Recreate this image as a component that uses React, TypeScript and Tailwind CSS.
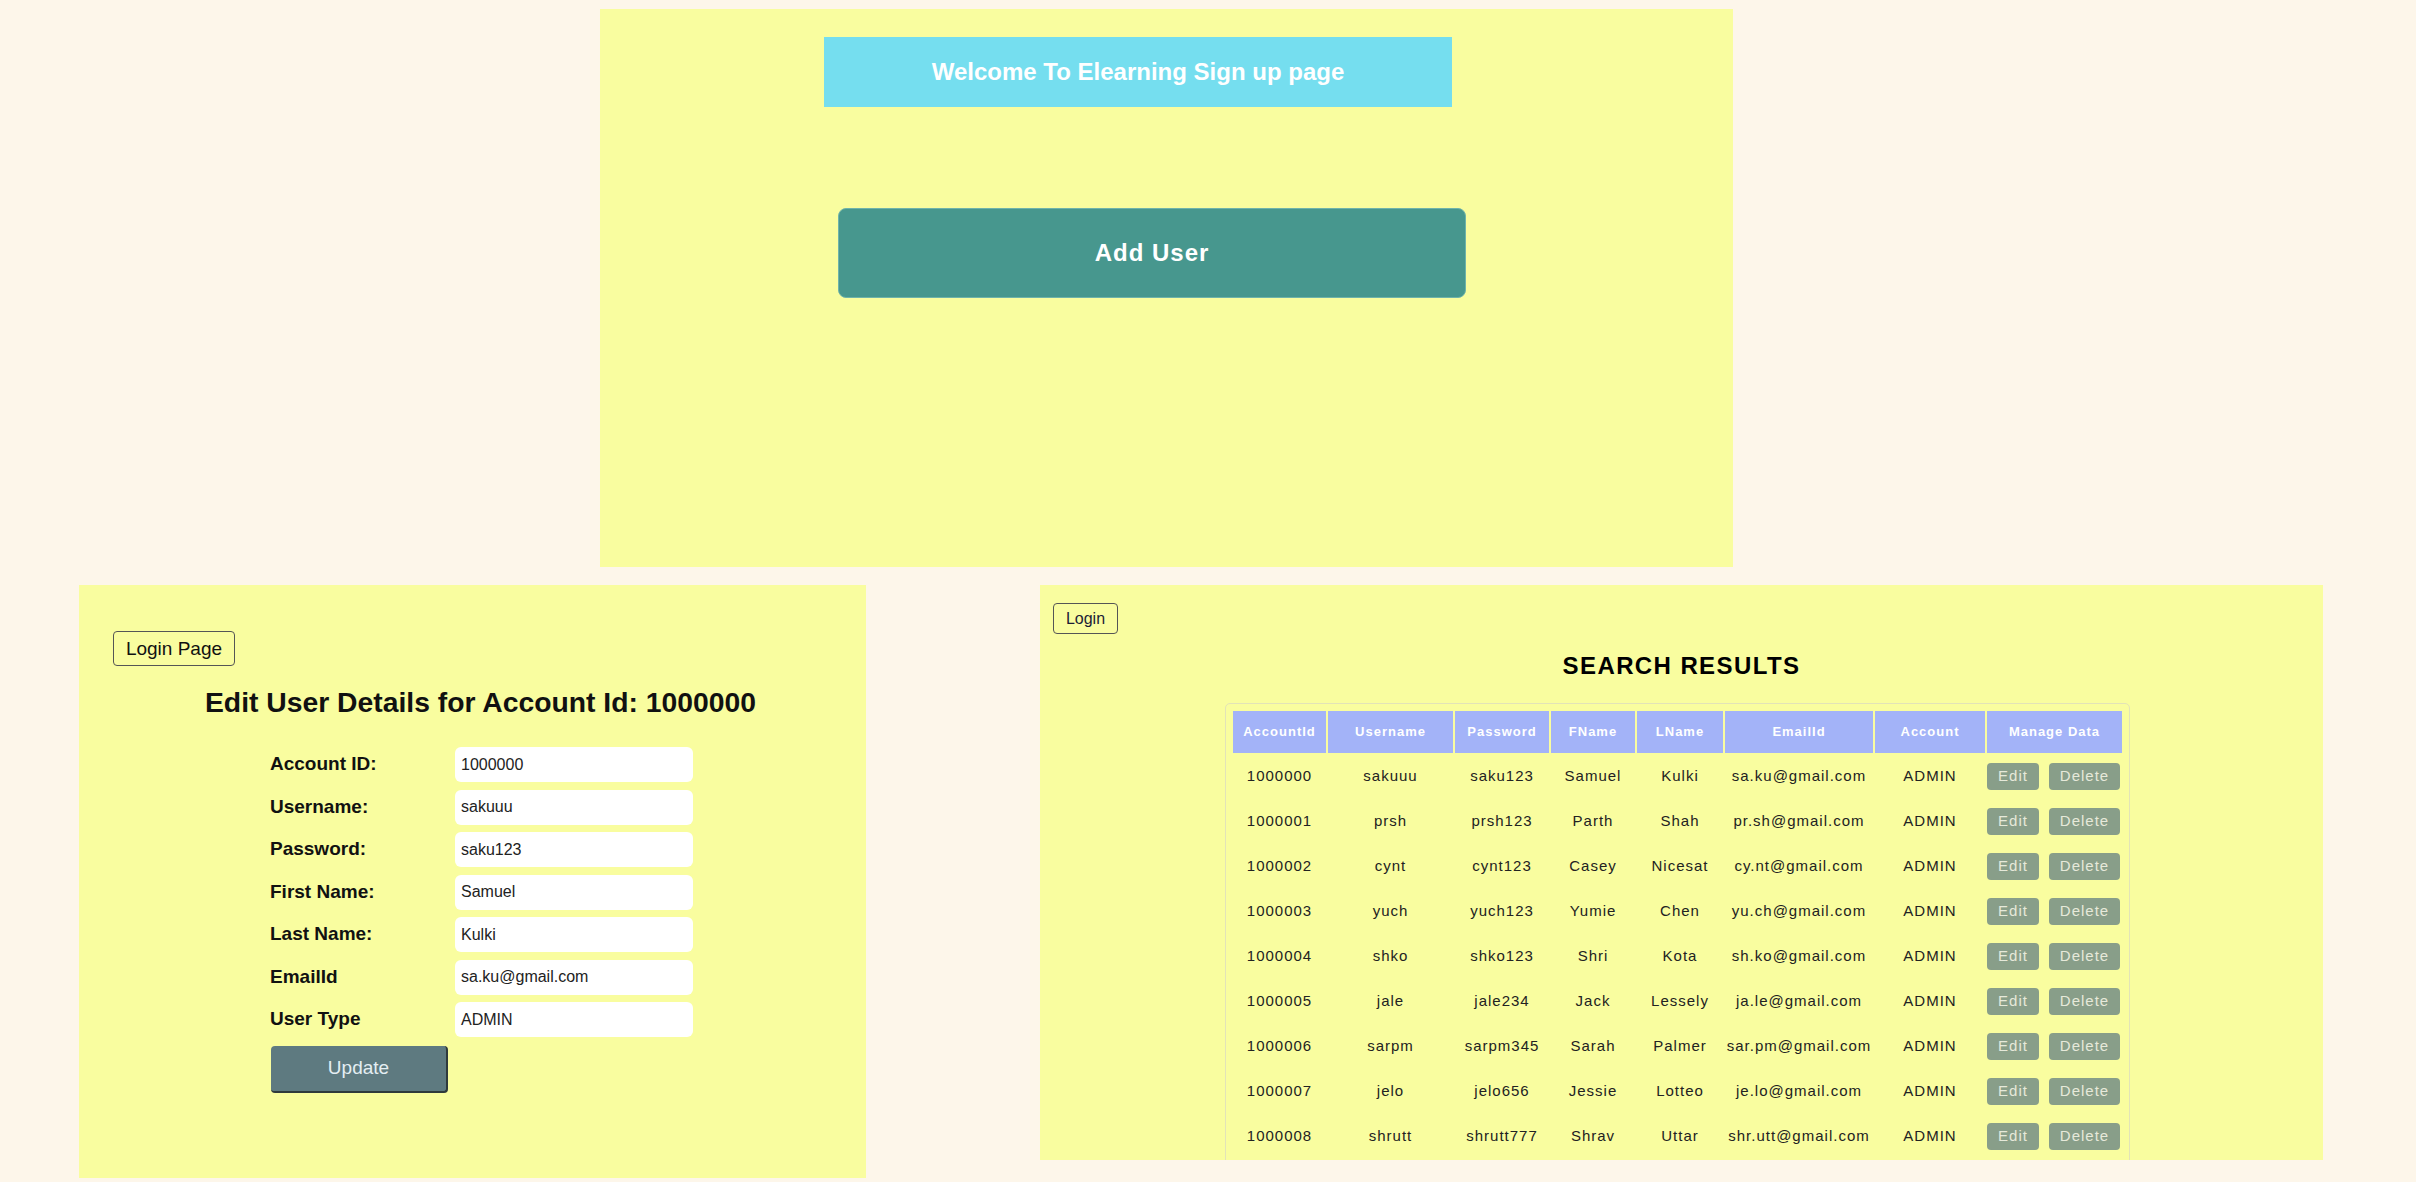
import React from "react";

const users = [
    { id: "1000000", username: "sakuuu", password: "saku123", fname: "Samuel", lname: "Kulki", email: "sa.ku@gmail.com", account: "ADMIN" },
    { id: "1000001", username: "prsh", password: "prsh123", fname: "Parth", lname: "Shah", email: "pr.sh@gmail.com", account: "ADMIN" },
    { id: "1000002", username: "cynt", password: "cynt123", fname: "Casey", lname: "Nicesat", email: "cy.nt@gmail.com", account: "ADMIN" },
    { id: "1000003", username: "yuch", password: "yuch123", fname: "Yumie", lname: "Chen", email: "yu.ch@gmail.com", account: "ADMIN" },
    { id: "1000004", username: "shko", password: "shko123", fname: "Shri", lname: "Kota", email: "sh.ko@gmail.com", account: "ADMIN" },
    { id: "1000005", username: "jale", password: "jale234", fname: "Jack", lname: "Lessely", email: "ja.le@gmail.com", account: "ADMIN" },
    { id: "1000006", username: "sarpm", password: "sarpm345", fname: "Sarah", lname: "Palmer", email: "sar.pm@gmail.com", account: "ADMIN" },
    { id: "1000007", username: "jelo", password: "jelo656", fname: "Jessie", lname: "Lotteo", email: "je.lo@gmail.com", account: "ADMIN" },
    { id: "1000008", username: "shrutt", password: "shrutt777", fname: "Shrav", lname: "Uttar", email: "shr.utt@gmail.com", account: "ADMIN" },
];

const fields = [
    { label: "Account ID:", value: "1000000" },
    { label: "Username:", value: "sakuuu" },
    { label: "Password:", value: "saku123" },
    { label: "First Name:", value: "Samuel" },
    { label: "Last Name:", value: "Kulki" },
    { label: "EmailId", value: "sa.ku@gmail.com" },
    { label: "User Type", value: "ADMIN" },
];

const columns = [
    { title: "AccountId", w: "w-[93px]" },
    { title: "Username", w: "w-[125px]" },
    { title: "Password", w: "w-[94px]" },
    { title: "FName", w: "w-[84px]" },
    { title: "LName", w: "w-[86px]" },
    { title: "EmailId", w: "w-[148px]" },
    { title: "Account", w: "w-[110px]" },
    { title: "Manage Data", w: "w-[135px]" },
];

function SignUpPanel() {
    return (
        <div className="ml-[600px] w-[1133px] h-[558px] bg-[#f9fd9f] flex flex-col">
            {/* Banner */}
            <div className="shrink-0 mt-[28px] ml-[224px] w-[628px] h-[70px] bg-[#75deef] flex items-center justify-center">
                <span className="text-white font-bold text-[24px]">Welcome To Elearning Sign up page</span>
            </div>

            <button className="shrink-0 mt-[101px] ml-[238px] w-[628px] h-[90px] rounded-[8px] bg-[#47978e] border border-[#6fb3aa] text-white font-bold text-[24px] tracking-[1px]">
                Add User
            </button>
        </div>
    );
}

function EditUserPanel() {
    return (
        <div className="w-[787px] h-[593px] bg-[#f9fd9f] flex flex-col text-[#111]">
            <button className="shrink-0 mt-[46px] ml-[34px] w-[122px] h-[35px] border border-[#555] rounded-[4px] text-[19px] leading-none">
                Login Page
            </button>

            <h2 className="shrink-0 mt-[20px] ml-[126px] font-bold text-[28.3px] leading-[32px]">
                Edit User Details for Account Id: 1000000
            </h2>

            <div className="shrink-0 mt-[29px] ml-[191px] flex flex-col gap-[7.5px]">
                {fields.map((f) => (
                    <div key={f.label} className="flex items-center">
                        <label className="w-[185px] font-bold text-[19px]">{f.label}</label>
                        <div className="w-[238px] h-[35px] bg-white rounded-[6px] flex items-center pl-[6px] text-[16px] text-[#222]">
                            {f.value}
                        </div>
                    </div>
                ))}
            </div>

            <button className="shrink-0 mt-[9px] ml-[192px] w-[177px] h-[47px] bg-[#5e7a80] rounded-[4px] border-b-2 border-r-2 border-[#2f3a3c] text-[#e4eef2] text-[19px]">
                Update
            </button>
        </div>
    );
}

function SearchResultsPanel() {
    return (
        <div className="w-[1283px] h-[575px] bg-[#f9fd9f] flex flex-col overflow-hidden text-[#222]">
            <button className="shrink-0 mt-[18px] ml-[13px] w-[65px] h-[31px] border border-[#555] rounded-[4px] text-[16px] text-[#1c1c36] leading-none">
                Login
            </button>

            <h2 className="shrink-0 mt-[18px] text-center font-bold text-[24px] tracking-[1.4px] leading-[28px] text-black">
                SEARCH RESULTS
            </h2>

            <div className="shrink-0 mt-[23px] ml-[185px] w-fit border border-[#e2e3b8] rounded-[5px] p-[5px]">
                <table className="table-fixed border-separate border-spacing-[2px] tracking-[1px]">
                    <thead>
                        <tr>
                            {columns.map((c) => (
                                <th key={c.title} className={`${c.w} h-[42px] bg-[#a3b3f8] text-white font-bold text-[13px] text-center`}>
                                    {c.title}
                                </th>
                            ))}
                        </tr>
                    </thead>
                    <tbody>
                        {users.map((u) => (
                            <tr key={u.id} className="h-[43px] text-[15px] text-center">
                                <td>{u.id}</td>
                                <td>{u.username}</td>
                                <td>{u.password}</td>
                                <td>{u.fname}</td>
                                <td>{u.lname}</td>
                                <td>{u.email}</td>
                                <td>{u.account}</td>
                                <td>
                                    <div className="flex gap-[10px]">
                                        <button className="w-[52px] h-[27px] rounded-[4px] bg-[#889e89] text-[#e6e9da] text-[15px]">
                                            Edit
                                        </button>
                                        <button className="w-[71px] h-[27px] rounded-[4px] bg-[#889e89] text-[#e6e9da] text-[15px]">
                                            Delete
                                        </button>
                                    </div>
                                </td>
                            </tr>
                        ))}
                    </tbody>
                </table>
            </div>
        </div>
    );
}

export default function App() {
    return (
        <div className="w-[2416px] h-[1182px] bg-[#fdf6ea] font-['Liberation_Sans',Arial,sans-serif] pt-[9px] overflow-hidden">
            <SignUpPanel />

            <div className="mt-[18px] pl-[79px] flex gap-[174px]">
                <EditUserPanel />
                <SearchResultsPanel />
            </div>
        </div>
    );
}
